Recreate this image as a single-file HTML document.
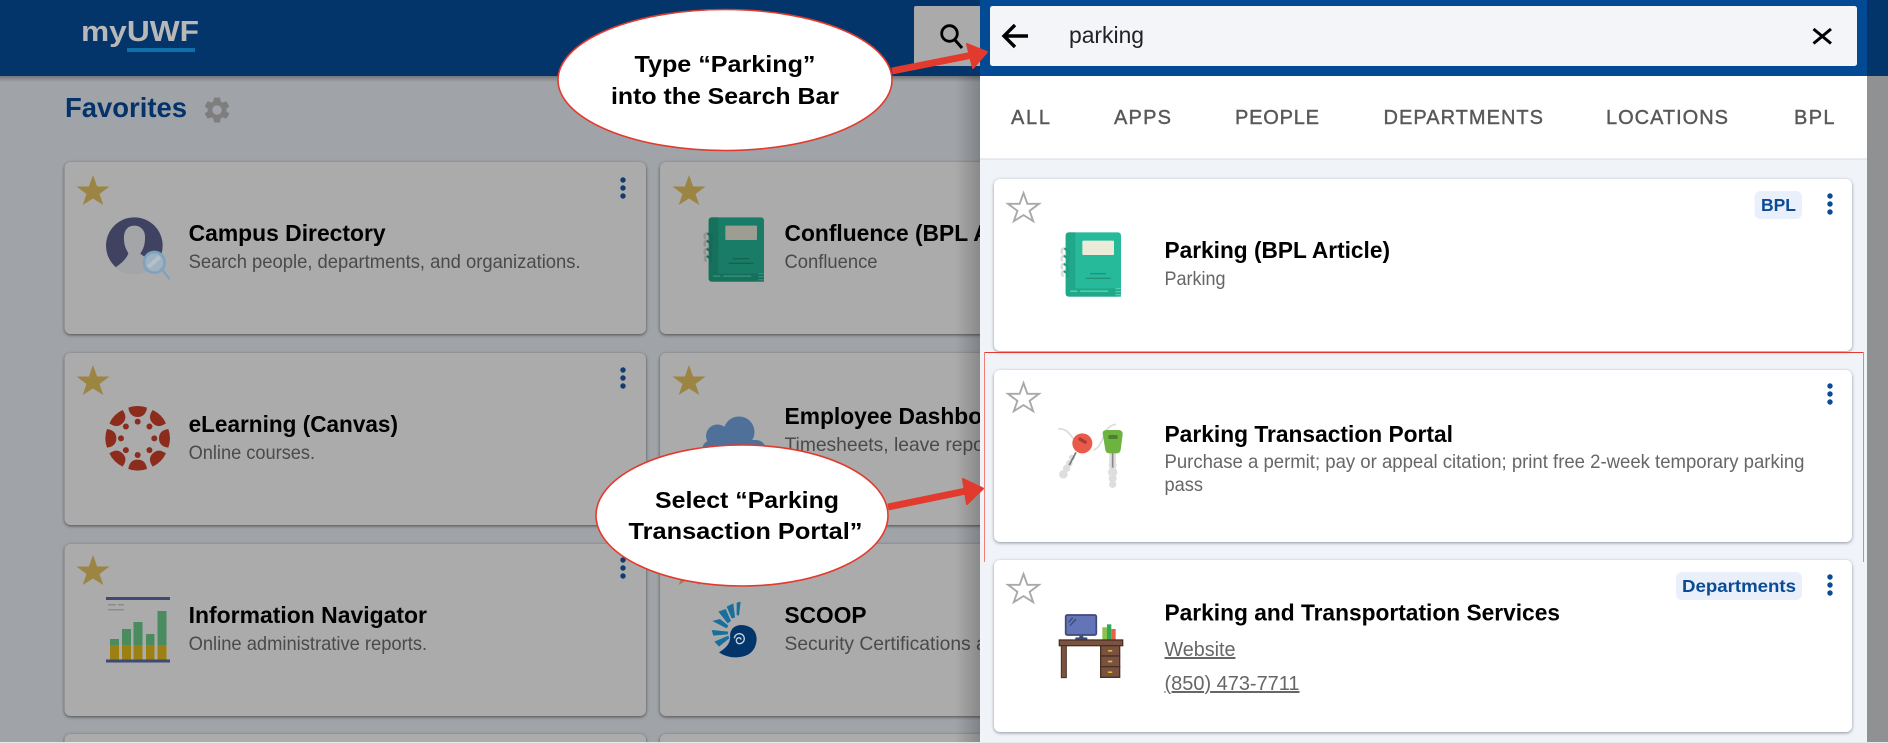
<!DOCTYPE html>
<html lang="en"><head><meta charset="utf-8"><title>myUWF Parking Search</title>
<style>
html,body{margin:0;padding:0;width:1888px;height:743px;overflow:hidden;background:#a0a4a8}
svg{display:block}
text{font-family:"Liberation Sans",Arial,sans-serif}
.t{font-size:22.8px;font-weight:700;fill:#000}
.s{font-size:19.26px;fill:#4a4a4a}
.ps{font-size:19.26px;fill:#666}
.tab{font-size:20px;fill:#585858;stroke:#585858;stroke-width:.4px}
.tag{font-size:17.6px;font-weight:700;fill:#0a4b94}
.call{font-size:23px;font-weight:700;fill:#000}
.lc{fill:#ababab;filter:drop-shadow(0 1px 1.5px rgba(40,40,40,.7))}
.pc{fill:#fff;filter:drop-shadow(0 1px 1.5px rgba(60,70,80,.55))}
.u{text-decoration:underline}
</style></head><body>
<svg width="1888" height="743" viewBox="0 0 1888 743" xmlns="http://www.w3.org/2000/svg">
<defs>
<linearGradient id="sh" x1="0" x2="1" y1="0" y2="0"><stop offset="0" stop-color="#000" stop-opacity="0"/><stop offset="1" stop-color="#000" stop-opacity=".2"/></linearGradient>
<linearGradient id="hs" x1="0" x2="0" y1="0" y2="1"><stop offset="0" stop-color="#000" stop-opacity=".28"/><stop offset="1" stop-color="#000" stop-opacity="0"/></linearGradient>
<polygon id="star" points="16.5,0 20.6,11.5 33,11.5 23,19 26.8,30 16.5,23.5 6.2,30 10,19 0,11.5 12.4,11.5"/>
<g id="keb"><circle cy="-8" r="2.7"/><circle r="2.7"/><circle cy="8" r="2.7"/></g>
<g id="book">
<rect x="47" y="22" width="166" height="193" rx="9" fill="#26b99a"/>
<path d="M56 22H76V190H47V31a9 9 0 0 1 9-9z" fill="#21a88a"/>
<path d="M47 190H213V215H56a9 9 0 0 1-9-9z" fill="#21a88a"/>
<rect x="97" y="47" width="95" height="43" rx="3" fill="#ecebd9"/>
<rect x="120" y="144" width="48" height="4" fill="#1e9376"/><rect x="107" y="158" width="75" height="4" fill="#1e9376"/>
<rect x="60" y="196" width="22" height="5" rx="2.5" fill="#52cdb2"/><rect x="90" y="196" width="85" height="5" rx="2.5" fill="#52cdb2"/>
<rect x="196" y="189" width="17" height="4" fill="#52cdb2"/><rect x="196" y="198" width="17" height="4" fill="#52cdb2"/><rect x="196" y="207" width="17" height="4" fill="#52cdb2"/>
<g fill="none" stroke="#d8dedb" stroke-width="8" stroke-linecap="round"><path d="M44 70Q32 72 36 84"/><path d="M44 92Q32 94 36 106"/><path d="M44 116Q32 118 36 130"/><path d="M44 138Q32 140 38 152"/></g>
<g fill="none" stroke-linecap="round" stroke-width="7" stroke="#1f9d80"><path d="M46 72Q60 76 56 92"/><path d="M44 94Q58 98 54 114"/><path d="M44 118Q58 122 54 138"/><path d="M44 140Q56 144 52 156"/></g>
</g>
</defs>

<!-- background -->
<rect width="1888" height="743" fill="#a0a4a8"/>
<rect width="1888" height="76" fill="#03356a"/>
<rect y="76" width="980" height="6" fill="url(#hs)"/>
<text x="81" y="41" font-size="29" font-weight="700" fill="#b8b8b8" textLength="118" lengthAdjust="spacingAndGlyphs">myUWF</text>
<rect x="127" y="48" width="68" height="4" fill="#0f6fa8"/>
<rect x="914" y="6" width="70" height="60" rx="2" fill="#aaa"/>
<circle cx="949.5" cy="33.5" r="7.8" fill="none" stroke="#000" stroke-width="2.8"/><path d="M955 40L962 48" stroke="#000" stroke-width="3"/>

<text x="65" y="117" font-size="27.4" font-weight="700" fill="#04336a" textLength="122" lengthAdjust="spacingAndGlyphs">Favorites</text>
<path transform="translate(201.4,94.4) scale(1.3)" fill="#7e7e7e" d="M19.14 12.94c.04-.3.06-.61.06-.94 0-.32-.02-.64-.07-.94l2.03-1.58a.49.49 0 0 0 .12-.61l-1.92-3.32a.488.488 0 0 0-.59-.22l-2.39.96c-.5-.38-1.03-.7-1.62-.94l-.36-2.54a.484.484 0 0 0-.48-.41h-3.84c-.24 0-.43.17-.47.41l-.36 2.54c-.59.24-1.13.57-1.62.94l-2.39-.96c-.22-.08-.47 0-.59.22L2.74 8.87c-.12.21-.08.47.12.61l2.03 1.58c-.05.3-.09.63-.09.94s.02.64.07.94l-2.03 1.58a.49.49 0 0 0-.12.61l1.92 3.32c.12.22.37.29.59.22l2.39-.96c.5.38 1.03.7 1.62.94l.36 2.54c.05.24.24.41.48.41h3.84c.24 0 .44-.17.47-.41l.36-2.54c.59-.24 1.13-.56 1.62-.94l2.39.96c.22.08.47 0 .59-.22l1.92-3.32c.12-.22.07-.47-.12-.61l-2.01-1.58zM12 15.6c-1.98 0-3.6-1.62-3.6-3.6s1.62-3.6 3.6-3.6 3.6 1.62 3.6 3.6-1.62 3.6-3.6 3.6z"/>

<!-- left cards -->
<rect class="lc" x="64.5" y="162" width="581.5" height="172" rx="6"/>
<rect class="lc" x="660" y="162" width="340" height="172" rx="6"/>
<rect class="lc" x="64.5" y="353" width="581.5" height="172" rx="6"/>
<rect class="lc" x="660" y="353" width="340" height="172" rx="6"/>
<rect class="lc" x="64.5" y="544" width="581.5" height="172" rx="6"/>
<rect class="lc" x="660" y="544" width="340" height="172" rx="6"/>
<rect class="lc" x="64.5" y="734" width="581.5" height="30" rx="6"/>
<rect class="lc" x="660" y="734" width="340" height="30" rx="6"/>

<g fill="#9c8442">
<use href="#star" x="76.5" y="175"/><use href="#star" x="672.5" y="175"/>
<use href="#star" x="76.5" y="365"/><use href="#star" x="672.5" y="365"/>
<use href="#star" x="76.5" y="555"/><use href="#star" x="672.5" y="555"/>
</g>
<g fill="#123c70"><use href="#keb" x="623" y="188"/><use href="#keb" x="623" y="378"/><use href="#keb" x="623" y="568"/></g>

<!-- campus directory icon -->
<g transform="translate(95,205) scale(.3333)">
<circle cx="118" cy="122" r="85" fill="#3f4261"/>
<path d="M118 62C95 62 85 80 87 105C88 125 95 135 100 145C95 160 80 175 60 188C80 205 100 208 120 208C150 208 170 195 185 165C165 160 142 155 136 145C143 135 150 122 150 100C152 80 140 62 118 62Z" fill="#a3a5a8"/>
<path d="M205 198L222 220" stroke="#7ea2bf" stroke-width="7" stroke-linecap="round"/>
<circle cx="178" cy="172" r="31" fill="#9fb2c2" stroke="#7ea2bf" stroke-width="8"/>
<path d="M160 186L194 156" stroke="#b6c0c8" stroke-width="12"/>
</g>
<text class="t" x="188.6" y="241" textLength="197" lengthAdjust="spacingAndGlyphs">Campus Directory</text>
<text class="s" x="188.6" y="268" textLength="392" lengthAdjust="spacingAndGlyphs">Search people, departments, and organizations.</text>

<!-- canvas icon -->
<g transform="translate(95,400) scale(.3333)" fill="#8c2c1c">
<g transform="translate(128,115)">
<g id="cv"><path d="M-28-92Q0-102 28-92Q24-64 0-64Q-24-64-28-92Z"/><circle cy="-50" r="9"/></g>
<use href="#cv" transform="rotate(45)"/><use href="#cv" transform="rotate(90)"/><use href="#cv" transform="rotate(135)"/>
<use href="#cv" transform="rotate(180)"/><use href="#cv" transform="rotate(225)"/><use href="#cv" transform="rotate(270)"/><use href="#cv" transform="rotate(315)"/>
</g></g>
<text class="t" x="188.6" y="432" textLength="209.4" lengthAdjust="spacingAndGlyphs">eLearning (Canvas)</text>
<text class="s" x="188.6" y="459" textLength="126.5" lengthAdjust="spacingAndGlyphs">Online courses.</text>

<!-- info navigator icon -->
<rect x="106" y="597" width="64" height="3" fill="#3e4a72"/>
<rect x="108" y="604" width="8" height="1.5" fill="#8c8c8c"/><rect x="118" y="604" width="6" height="1.5" fill="#8c8c8c"/><rect x="108" y="609" width="16" height="1.5" fill="#8c8c8c"/>
<g fill="#4a8c60"><rect x="110" y="639" width="9" height="7"/><rect x="122" y="629" width="9" height="17"/><rect x="133.5" y="622" width="9" height="24"/><rect x="146" y="634" width="8.5" height="12"/><rect x="157.5" y="611" width="9" height="35"/></g>
<g fill="#9c8012"><rect x="110" y="645" width="9" height="15"/><rect x="122" y="645" width="9" height="15"/><rect x="133.5" y="645" width="9" height="15"/><rect x="146" y="645" width="8.5" height="15"/><rect x="157.5" y="645" width="9" height="15"/></g>
<rect x="106" y="659.5" width="64" height="3" fill="#3e4a72"/>
<text class="t" x="188.6" y="623" textLength="238.4" lengthAdjust="spacingAndGlyphs">Information Navigator</text>
<text class="s" x="188.6" y="650" textLength="238.5" lengthAdjust="spacingAndGlyphs">Online administrative reports.</text>

<!-- confluence -->
<g transform="translate(693,210) scale(.3333)" style="filter:brightness(.67)"><use href="#book"/></g>
<text class="t" x="784.5" y="241">Confluence (BPL Article)</text>
<text class="s" x="784.5" y="268" textLength="93" lengthAdjust="spacingAndGlyphs">Confluence</text>

<!-- employee dashboard -->
<g fill="#4f7098"><circle cx="717.5" cy="436" r="11.5"/><circle cx="739" cy="432" r="15.5"/><circle cx="755" cy="452" r="11.5"/><circle cx="713" cy="455" r="12.5"/><rect x="702" y="440" width="64" height="35" rx="10"/></g>
<text class="t" x="784.5" y="424">Employee Dashboard</text>
<text class="s" x="784.5" y="451">Timesheets, leave reporting, and more</text>

<!-- scoop -->
<g transform="translate(695,595) scale(.3333)">
<g fill="#186f9e"><polygon points="125,23 137,20 132,62 125,60"/><polygon points="95,35 115,25 120,68 110,70"/><polygon points="70,50 92,42 108,78 98,85"/><polygon points="52,78 75,72 100,92 95,100"/><polygon points="50,105 100,110 98,118 55,122"/><polygon points="58,140 100,122 103,130 72,155"/></g>
<path d="M72 172Q110 150 105 120Q108 92 138 90Q185 92 185 135Q180 185 125 187Q95 188 72 172Z" fill="#03356a"/>
<path d="M118 130a15 15 0 1 1 15 16q-9-1-9-10q1-8 9-8q5 1 5 6" fill="none" stroke="#c3d4de" stroke-width="4"/>
</g>
<text class="t" x="784.5" y="623" textLength="82" lengthAdjust="spacingAndGlyphs">SCOOP</text>
<text class="s" x="784.5" y="650">Security Certifications and Training</text>

<rect x="955" y="76" width="25" height="667" fill="url(#sh)"/>

<!-- right panel -->
<rect x="980" y="0" width="887" height="76" fill="#034a94"/>
<rect x="980" y="76" width="887" height="83" fill="#fff"/>
<rect x="980" y="159" width="887" height="584" fill="#f0f4f9"/>
<rect x="980" y="158.5" width="887" height="1" fill="#d5dbe3"/>
<rect x="990" y="6" width="867" height="60" rx="2.5" fill="#f3f5f9"/>
<rect x="1867" y="0" width="21" height="76" fill="#03356a"/>
<rect x="1867" y="76" width="21" height="667" fill="#8f9193"/>

<path d="M1028 36H1005M1015 25L1004 36L1015 47" fill="none" stroke="#000" stroke-width="3.4"/>
<text x="1069" y="43" font-size="22.9" fill="#222" textLength="75" lengthAdjust="spacingAndGlyphs">parking</text>
<path d="M1813.5 29L1831 43.5M1831 29L1813.5 43.5" stroke="#000" stroke-width="3"/>

<text class="tab" x="1011" y="124" textLength="39">ALL</text>
<text class="tab" x="1114" y="124" textLength="57">APPS</text>
<text class="tab" x="1235" y="124" textLength="84">PEOPLE</text>
<text class="tab" x="1383.5" y="124" textLength="159.5">DEPARTMENTS</text>
<text class="tab" x="1606" y="124" textLength="122">LOCATIONS</text>
<text class="tab" x="1794" y="124" textLength="40.5">BPL</text>

<rect class="pc" x="994" y="179" width="858" height="172" rx="6"/>
<rect class="pc" x="994" y="370" width="858" height="172" rx="6"/>
<rect class="pc" x="994" y="560" width="858" height="172" rx="6"/>

<g fill="none" stroke="#a9a9a9" stroke-width="2" stroke-linejoin="miter">
<use href="#star" transform="translate(1008,193) scale(.94)"/>
<use href="#star" transform="translate(1008,383) scale(.94)"/>
<use href="#star" transform="translate(1008,574) scale(.94)"/>
</g>
<g fill="#0a4b94"><use href="#keb" x="1830" y="204"/><use href="#keb" x="1830" y="394"/><use href="#keb" x="1830" y="585"/></g>

<!-- card 1 -->
<g transform="translate(1050,225) scale(.3333)"><use href="#book"/></g>
<text class="t" x="1164.5" y="258" textLength="225.5" lengthAdjust="spacingAndGlyphs">Parking (BPL Article)</text>
<text class="ps" x="1164.5" y="285" textLength="61" lengthAdjust="spacingAndGlyphs">Parking</text>
<rect x="1754.5" y="191" width="47.5" height="28" rx="6" fill="#e9f0fb"/>
<text class="tag" x="1761" y="211" textLength="35" lengthAdjust="spacingAndGlyphs">BPL</text>

<!-- card 2 keys -->
<g transform="translate(1050,415) scale(.3333)">
<path d="M25 42Q50 38 70 72M130 105Q150 100 165 52Q178 30 198 28" fill="none" stroke="#dcdcdc" stroke-width="5"/>
<g fill="#dedede"><circle cx="66" cy="128" r="9"/><circle cx="58" cy="145" r="10"/><circle cx="50" cy="160" r="11"/><circle cx="40" cy="178" r="13"/></g>
<path d="M78 112L58 150" stroke="#777" stroke-width="5"/>
<circle cx="97" cy="85" r="30" fill="#ea5a4a"/>
<rect x="84" y="72" width="28" height="10" rx="5" transform="rotate(30 98 77)" fill="#a83c32"/>
<g fill="#dedede"><rect x="178" y="115" width="20" height="50"/><circle cx="188" cy="150" r="12"/><circle cx="188" cy="172" r="14"/><circle cx="188" cy="190" r="12"/><circle cx="188" cy="208" r="11"/></g>
<path d="M188 112V158" stroke="#888" stroke-width="5"/>
<path d="M158 55Q158 45 170 45H205Q218 45 218 58L212 105Q210 115 200 115H178Q168 115 166 105Z" fill="#6cb33f"/>
<rect x="175" y="60" width="28" height="12" rx="4" fill="#4d7f2e"/>
</g>
<text class="t" x="1164.5" y="442" textLength="288.5" lengthAdjust="spacingAndGlyphs">Parking Transaction Portal</text>
<text class="ps" x="1164.5" y="468" textLength="640" lengthAdjust="spacingAndGlyphs">Purchase a permit; pay or appeal citation; print free 2-week temporary parking</text>
<text class="ps" x="1164.5" y="491" textLength="38.5" lengthAdjust="spacingAndGlyphs">pass</text>

<!-- card 3 desk -->
<g transform="translate(1050,605) scale(.3333)">
<rect x="47" y="30" width="92" height="60" rx="5" fill="#6474b8" stroke="#3f4a75" stroke-width="5"/>
<path d="M56 52L68 38M60 62L78 42" stroke="#3f4a75" stroke-width="4"/>
<rect x="88" y="92" width="12" height="8" fill="#3f4a75"/><rect x="76" y="97" width="36" height="8" rx="2" fill="#3f4a75"/>
<rect x="157" y="67" width="14" height="38" fill="#8bc34a"/><rect x="171" y="58" width="13" height="47" fill="#2eaa55"/><rect x="184" y="72" width="13" height="33" fill="#e8604a"/>
<rect x="28" y="105" width="190" height="17" fill="#7a5240" stroke="#4a2f25" stroke-width="4"/>
<rect x="34" y="122" width="15" height="96" fill="#7a5240" stroke="#4a2f25" stroke-width="3"/>
<g fill="#7a5240" stroke="#4a2f25" stroke-width="4"><rect x="152" y="122" width="57" height="31"/><rect x="152" y="153" width="57" height="32"/><rect x="152" y="185" width="57" height="32"/></g>
<g fill="#e0b93e"><rect x="174" y="135" width="13" height="5" rx="2"/><rect x="174" y="167" width="13" height="5" rx="2"/><rect x="174" y="199" width="13" height="5" rx="2"/></g>
</g>
<text class="t" x="1164.5" y="620.5" textLength="395.5" lengthAdjust="spacingAndGlyphs">Parking and Transportation Services</text>
<text class="ps u" x="1164.5" y="656" style="font-size:19.9px" textLength="71" lengthAdjust="spacingAndGlyphs">Website</text>
<text class="ps u" x="1164.5" y="690" style="font-size:19.9px" textLength="135" lengthAdjust="spacingAndGlyphs">(850) 473-7711</text>
<rect x="1676" y="572" width="126" height="28" rx="6" fill="#e9f0fb"/>
<text class="tag" x="1682" y="592" textLength="114" lengthAdjust="spacingAndGlyphs">Departments</text>

<!-- red highlight -->
<rect x="984" y="352" width="880" height="1" fill="#e33a2f"/>
<rect x="984" y="352" width="1" height="210" fill="#ee8078"/>
<rect x="1863" y="352" width="1" height="210" fill="#ee8078"/>

<!-- callouts -->
<path d="M892 71L970 55.5" stroke="#e23b2e" stroke-width="7"/>
<polygon points="987,52 967,44 973,68" fill="#e23b2e" stroke="#e23b2e" stroke-width="2" stroke-linejoin="round"/>
<ellipse cx="725" cy="80" rx="167" ry="70.5" fill="#fff" stroke="#e23b2e" stroke-width="1.6"/>
<text class="call" x="634.5" y="72" textLength="181" lengthAdjust="spacingAndGlyphs">Type “Parking”</text>
<text class="call" x="611" y="104" textLength="228" lengthAdjust="spacingAndGlyphs">into the Search Bar</text>

<path d="M888 507L966 491" stroke="#e23b2e" stroke-width="7"/>
<polygon points="983,488.5 963,479 967,504" fill="#e23b2e" stroke="#e23b2e" stroke-width="2" stroke-linejoin="round"/>
<ellipse cx="742" cy="515.5" rx="146" ry="70.5" fill="#fff" stroke="#e23b2e" stroke-width="1.6"/>
<text class="call" x="655" y="508" textLength="184" lengthAdjust="spacingAndGlyphs">Select “Parking</text>
<text class="call" x="628.5" y="539" textLength="234" lengthAdjust="spacingAndGlyphs">Transaction Portal”</text>

<rect y="742" width="1888" height="1" fill="#e8e8e8"/>
</svg>
</body></html>
